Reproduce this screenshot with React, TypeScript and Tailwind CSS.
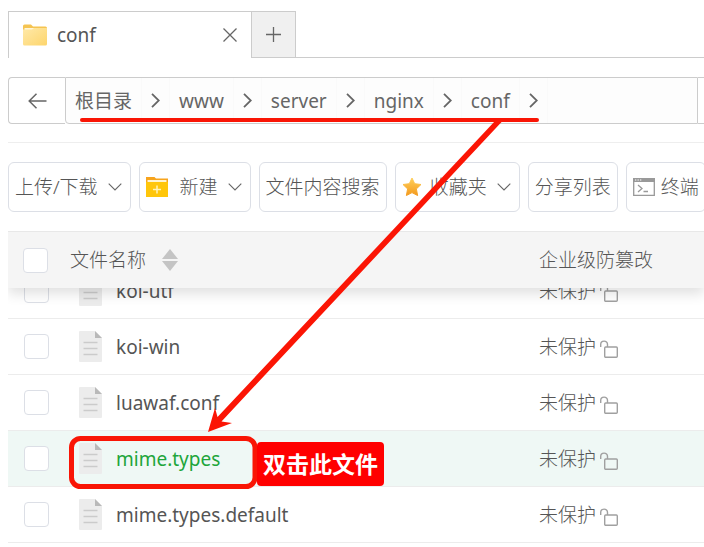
import { useEffect, useRef } from 'react';

interface FileRow {
  name: string;
  active?: boolean;
}

const crumbs = ['根目录', 'www', 'server', 'nginx', 'conf'];

const files: FileRow[] = [
  { name: 'koi-utf' },
  { name: 'koi-win' },
  { name: 'luawaf.conf' },
  { name: 'mime.types', active: true },
  { name: 'mime.types.default' },
];

const toolButton =
  'flex h-[50px] shrink-0 items-center whitespace-nowrap rounded-md border border-[#dcdfe6] bg-white pl-1.5 font-light';

const checkbox =
  'block size-[25px] appearance-none rounded border border-[#dcdfe6] bg-white checked:bg-[#20a53a]';

function ChevronDown() {
  return (
    <svg width="14" height="8" viewBox="0 0 14 8" fill="none" stroke="#666" strokeWidth="1.1" className="ml-2.5">
      <path d="M0.7 0.7 7 7 13.3 0.7" />
    </svg>
  );
}

function FolderIcon() {
  return (
    <svg width="24" height="22" viewBox="0 0 24 22">
      <defs>
        <linearGradient id="folder" x1="0" y1="0" x2="1" y2="1">
          <stop offset="0" stopColor="#ffe9a9" />
          <stop offset="1" stopColor="#fdd56c" />
        </linearGradient>
      </defs>
      <path d="M0 2a1.5 1.5 0 0 1 1.5-1.5H8L10 2.5h12.5A1.5 1.5 0 0 1 24 4v6H0z" fill="#f5c451" />
      <path d="M1.5 4h21v6h-21z" fill="#fff6d8" />
      <path d="M0 5.5h9l2-1.5h13v16a1.5 1.5 0 0 1-1.5 1.5h-21A1.5 1.5 0 0 1 0 20z" fill="url(#folder)" />
    </svg>
  );
}

function NewFolderIcon() {
  return (
    <svg width="22" height="20" viewBox="0 0 22 20">
      <path d="M0 0h8.5l1.5 1.5h12V8H0z" fill="#f7a41d" />
      <path d="M1.5 3h19v3h-19z" fill="#fff4cf" />
      <path d="M0 5h22v15H0z" fill="#ffc60a" />
      <path d="M11 8.5v8M7 12.5h8" stroke="#fff3b8" strokeWidth="1.5" />
    </svg>
  );
}

function StarIcon() {
  return (
    <svg width="20" height="20" viewBox="0 0 20 20">
      <defs>
        <linearGradient id="star" x1="0" y1="0" x2="0" y2="1">
          <stop offset="0" stopColor="#ffcf5a" />
          <stop offset="1" stopColor="#f39a1e" />
        </linearGradient>
      </defs>
      <path
        d="M10 1 12.7 6.7 19 7.5 14.4 11.9 15.6 18.5 10 15.6 4.4 18.5 5.6 11.9 1 7.5 7.3 6.7z"
        fill="url(#star)"
        stroke="url(#star)"
        strokeWidth="1"
        strokeLinejoin="round"
      />
    </svg>
  );
}

function TerminalIcon() {
  return (
    <svg width="22" height="18" viewBox="0 0 22 18" fill="none">
      <path d="M0.7 0.7h20.6v16.6H0.7z" stroke="#999" strokeWidth="1.3" />
      <path d="M0 0h22v4H0z" fill="#999" />
      <path d="M2 2h1.3M4.5 2h1.3M7 2h1.3" stroke="#fff" strokeWidth="1" />
      <path d="M5 7l4 3.5L5 14M10.5 13.5h4.5" stroke="#999" strokeWidth="1.3" />
    </svg>
  );
}

function FileIcon() {
  return (
    <svg width="23" height="31" viewBox="0 0 23 31" className="shrink-0">
      <path d="M0 1a1 1 0 0 1 1-1h15l7 7v23a1 1 0 0 1-1 1H1a1 1 0 0 1-1-1z" fill="#ececec" />
      <path d="M16 0l7 7h-7z" fill="#b9b9b9" />
      <path d="M4.5 11.5h14M4.5 17.5h14M4.5 23.5h14" stroke="#cbcbcb" strokeWidth="1.3" />
    </svg>
  );
}

function UnlockIcon() {
  return (
    <svg width="18" height="18" viewBox="0 0 18 18" fill="none" stroke="#a0a0a0" strokeWidth="1.4" className="mt-1 ml-1">
      <path d="M0.7 7V4.5a3.3 3.3 0 0 1 6.8 0V7" />
      <rect x="4.7" y="7" width="12.6" height="10.2" rx="1" />
    </svg>
  );
}

export default function App() {
  const listRef = useRef<HTMLDivElement>(null);

  // the list opens partly scrolled, under its sticky header
  useEffect(() => {
    if (listRef.current) listRef.current.scrollTop = 25;
  }, []);

  return (
    <div className="relative flex h-screen flex-col overflow-hidden bg-white pl-2 font-['Noto_Sans','Noto_Sans_CJK_SC',sans-serif] text-[19px] leading-7 text-[#555]">
      {/* Tabs */}
      <div className="mt-[11px] flex h-[47px] shrink-0">
        <div className="flex w-[243px] items-center border-t border-l border-[#ccc] pl-3.5">
          <FolderIcon />
          <span className="ml-2.5 flex-1">conf</span>
          <button type="button" aria-label="关闭" className="mr-3.5">
            <svg width="14" height="14" viewBox="0 0 14 14" stroke="#666" strokeWidth="1.3">
              <path d="M0.5 0.5l13 13M13.5 0.5l-13 13" />
            </svg>
          </button>
        </div>
        <button
          type="button"
          aria-label="新标签"
          className="flex w-[45px] items-center justify-center border border-[#ccc] bg-[#f0f0f0]"
        >
          <svg width="15" height="15" viewBox="0 0 15 15" stroke="#666" strokeWidth="1.3">
            <path d="M7.5 0v15M0 7.5h15" />
          </svg>
        </button>
        <div className="flex-1 border-b border-[#ccc]" />
      </div>

      {/* Path bar */}
      <div className="mt-[19px] flex h-[47px] shrink-0">
        <button
          type="button"
          aria-label="返回"
          className="flex w-[57px] items-center justify-center rounded-l border border-r-0 border-[#ccc]"
        >
          <svg width="19" height="16" viewBox="0 0 19 16" fill="none" stroke="#666" strokeWidth="1.5">
            <path d="M8.5 0.7 1.2 8l7.3 7.3M1.2 8H18.5" />
          </svg>
        </button>
        <nav className="flex flex-1 items-stretch rounded-bl border border-[#ccc] bg-[#fdfdfd]">
          {crumbs.map((crumb) => (
            <div key={crumb} className="flex items-stretch">
              <a href="#" className="flex items-center px-[9px] text-[#666]">
                {crumb}
              </a>
              <span className="flex w-[29px] items-center justify-center border-x border-[#fafafa]">
                <svg width="9" height="15" viewBox="0 0 9 15" fill="none" stroke="#666" strokeWidth="1.8">
                  <path d="M1 0.8 7.8 7.5 1 14.2" />
                </svg>
              </span>
            </div>
          ))}
        </nav>
        <div className="w-1.5 border-y border-[#ccc]" />
      </div>

      {/* Toolbar */}
      <div className="mt-[18px] flex shrink-0 gap-2 border-t border-[#eee] pt-[19px] text-[#555]">
        <button type="button" className={`${toolButton} pr-2`}>
          上传/下载
          <ChevronDown />
        </button>
        <button type="button" className={`${toolButton} pr-2`}>
          <NewFolderIcon />
          <span className="ml-3">新建</span>
          <ChevronDown />
        </button>
        <button type="button" className={`${toolButton} pr-1.5`}>文件内容搜索</button>
        <button type="button" className={`${toolButton} pr-2`}>
          <StarIcon />
          <span className="ml-2">收藏夹</span>
          <ChevronDown />
        </button>
        <button type="button" className={`${toolButton} pr-1.5`}>分享列表</button>
        <button type="button" className={`${toolButton} pr-1.5`}>
          <TerminalIcon />
          <span className="ml-1.5">终端</span>
        </button>
      </div>

      {/* File list */}
      <div ref={listRef} className="mt-[19px] min-h-0 flex-1 overflow-y-auto pb-20 [scrollbar-width:none]">
        <table className="w-full table-fixed border-separate border-spacing-0 text-left">
          <thead className="sticky top-0 z-10 shadow-[0_6px_12px_rgba(0,0,0,0.12)]">
            <tr className="h-[57px] *:border-t *:border-[#e8e8e8] *:bg-[#f5f5f5] *:p-0 *:font-light">
              <th className="w-[62px]">
                <input type="checkbox" aria-label="全选" className={`${checkbox} ml-[15px]`} />
              </th>
              <th>
                <span className="flex items-center">
                  文件名称
                  <svg width="16" height="22" viewBox="0 0 16 22" fill="#c4c4c4" className="ml-4">
                    <path d="M8 0l8 10H0zM8 22l8-10H0z" />
                  </svg>
                </span>
              </th>
              <th className="w-[165px]">企业级防篡改</th>
            </tr>
          </thead>
          <tbody>
            {files.map((file) => (
              <tr
                key={file.name}
                className={`h-14 *:border-b *:border-[#ececec] *:p-0 ${file.active ? 'bg-[#eff8f5]' : ''}`}
              >
                <td>
                  <input type="checkbox" aria-label={file.name} className={`${checkbox} ml-4`} />
                </td>
                <td>
                  <span className={`ml-[9px] flex items-center ${file.active ? 'text-[#20a53a]' : ''}`}>
                    <FileIcon />
                    <span className="ml-3.5">{file.name}</span>
                  </span>
                </td>
                <td>
                  <span className="flex items-center font-light">
                    未保护
                    <UnlockIcon />
                  </span>
                </td>
              </tr>
            ))}
          </tbody>
        </table>
      </div>

      {/* Annotations */}
      <svg
        width="704"
        height="547"
        viewBox="0 0 704 547"
        className="pointer-events-none absolute top-0 left-0 z-20"
      >
        <path d="M82 120H537" stroke="#f91505" strokeWidth="4" strokeLinecap="round" />
        <path d="M495 121H502.5L221.5 421.5 232 423 208 432 215 408 217.5 417z" fill="#fb1505" />
        <rect x="71.5" y="438.5" width="183.5" height="48" rx="9" fill="none" stroke="#f91505" strokeWidth="5" />
      </svg>
      <div className="pointer-events-none absolute top-[442px] left-[257px] z-20 rounded bg-[#ff0000] px-1.5 py-2 text-[23px] leading-7 font-bold text-white">
        双击此文件
      </div>
    </div>
  );
}
